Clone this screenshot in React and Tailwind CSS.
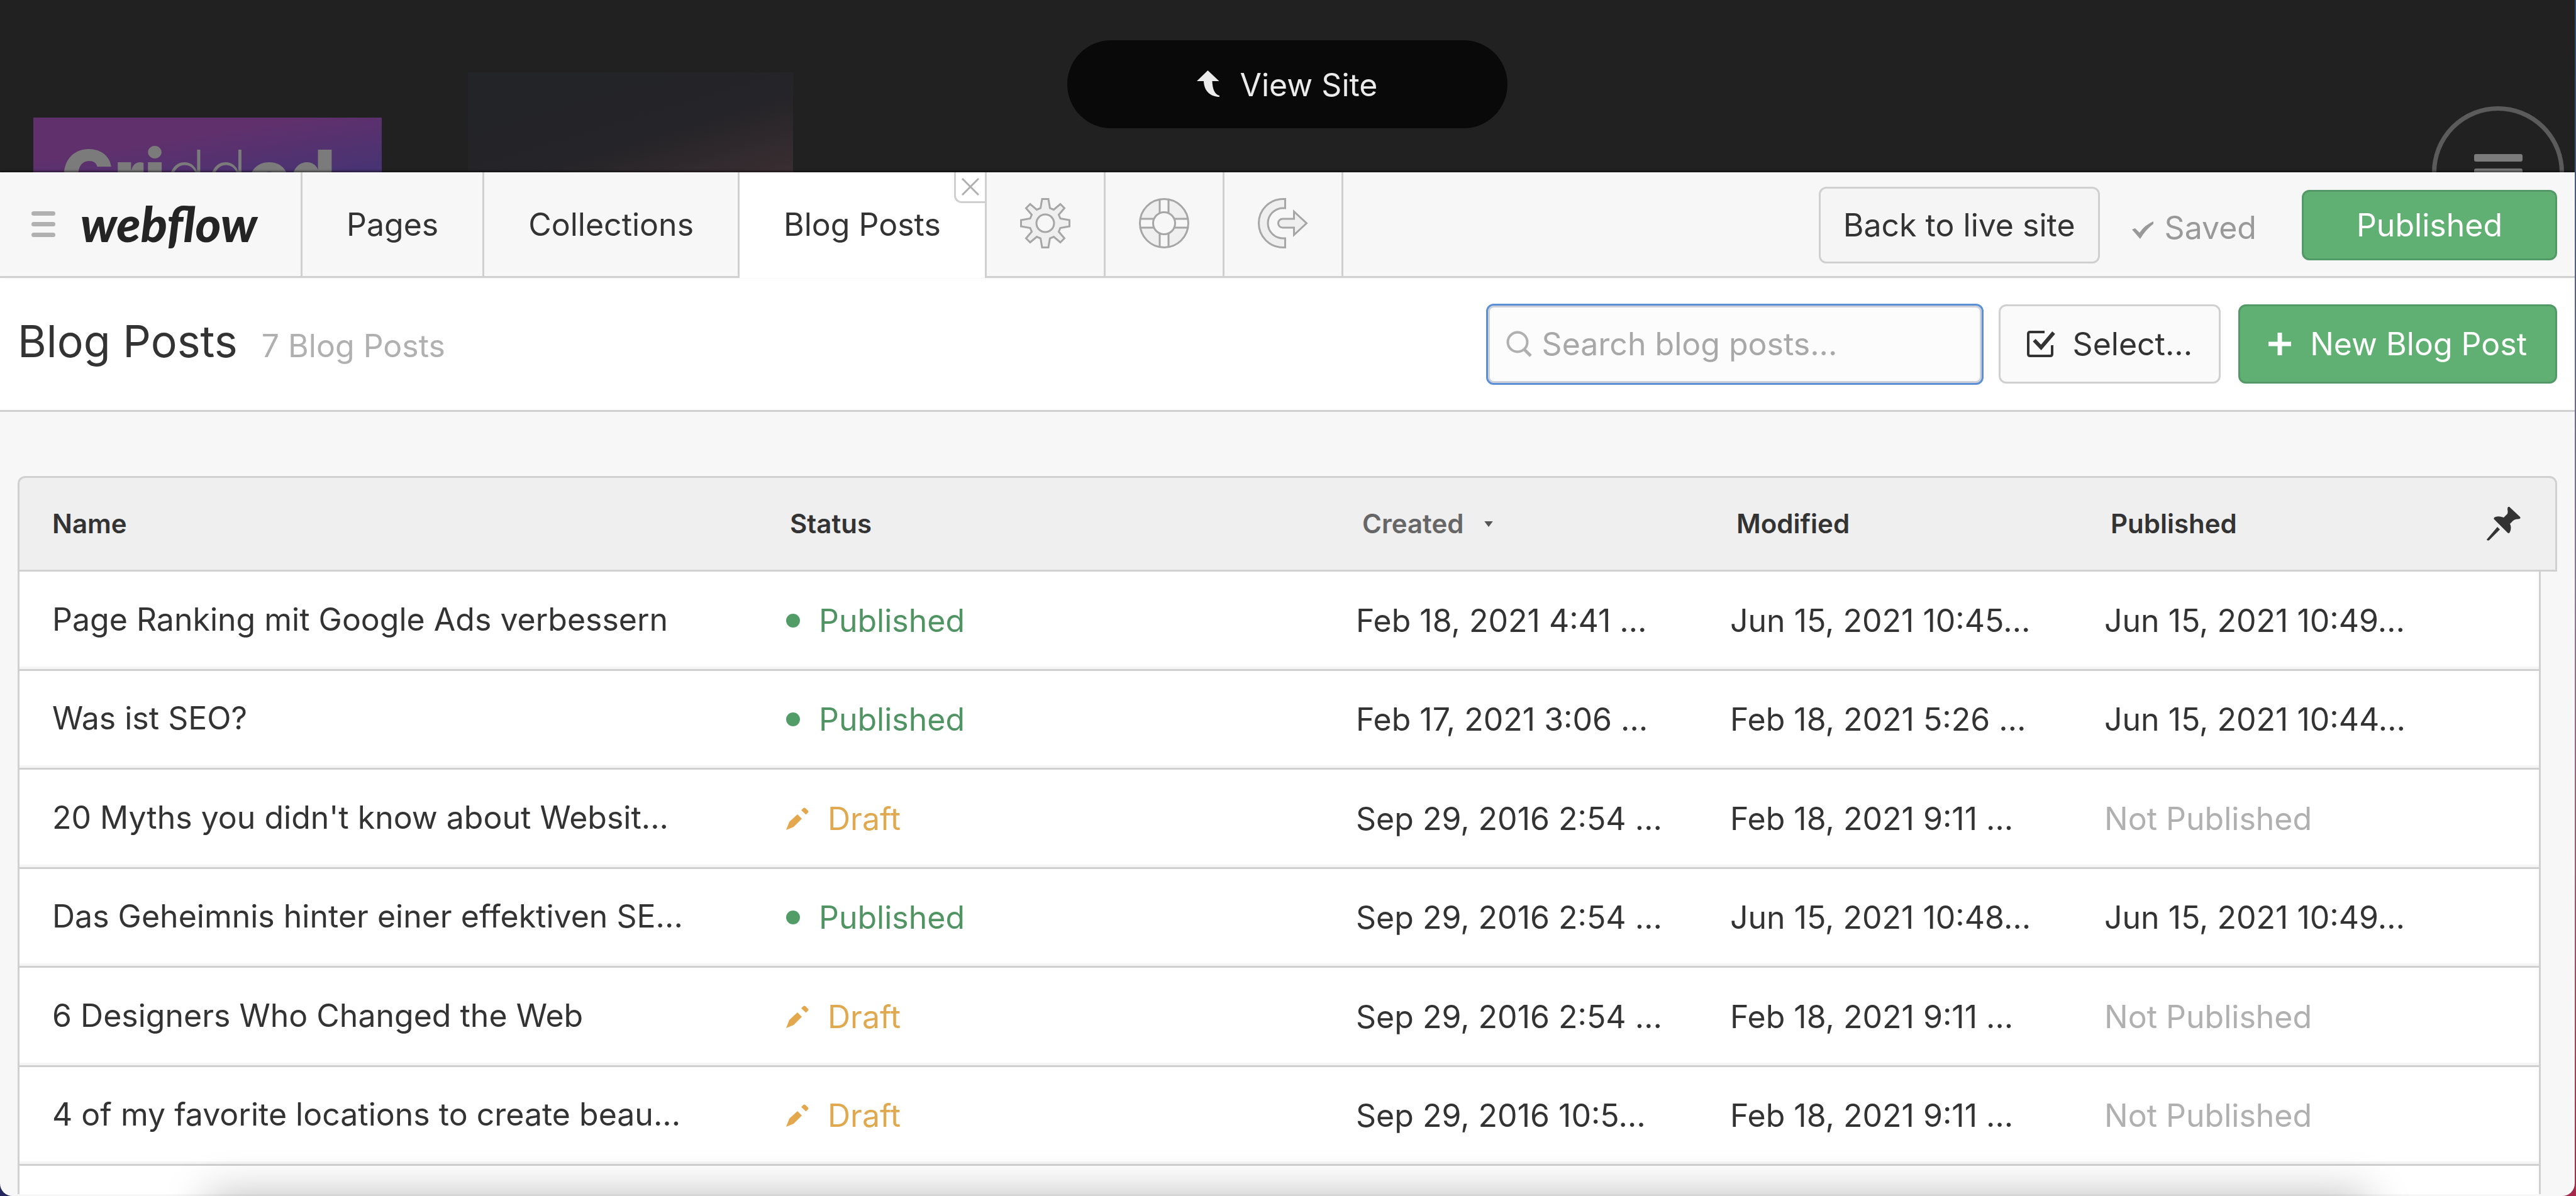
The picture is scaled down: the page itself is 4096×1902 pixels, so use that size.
import { useState } from "react";

const posts = [
  { name: "Page Ranking mit Google Ads verbessern", status: "Published", created: "Feb 18, 2021 4:41 …", modified: "Jun 15, 2021 10:45…", published: "Jun 15, 2021 10:49…" },
  { name: "Was ist SEO?", status: "Published", created: "Feb 17, 2021 3:06 …", modified: "Feb 18, 2021 5:26 …", published: "Jun 15, 2021 10:44…" },
  { name: "20 Myths you didn't know about Websit...", status: "Draft", created: "Sep 29, 2016 2:54 …", modified: "Feb 18, 2021 9:11 …", published: null },
  { name: "Das Geheimnis hinter einer effektiven SE...", status: "Published", created: "Sep 29, 2016 2:54 …", modified: "Jun 15, 2021 10:48…", published: "Jun 15, 2021 10:49…" },
  { name: "6 Designers Who Changed the Web", status: "Draft", created: "Sep 29, 2016 2:54 …", modified: "Feb 18, 2021 9:11 …", published: null },
  { name: "4 of my favorite locations to create beau...", status: "Draft", created: "Sep 29, 2016 10:5…", modified: "Feb 18, 2021 9:11 …", published: null },
];

const GearIcon = () => (
  <svg className="size-20" viewBox="0 0 80 80" fill="#efefef" stroke="#a6a6a6" strokeWidth="3">
    <path d="M35 1.5H45L47.5 16L53.5 18.5L64 9.5L70.5 16L61.5 26.5L64 32.5L78.5 35V45L64 47.5L61.5 53.5L70.5 64L64 70.5L53.5 61.5L47.5 64L45 78.5H35L32.5 64L26.5 61.5L16 70.5L9.5 64L18.5 53.5L16 47.5L1.5 45V35L16 32.5L18.5 26.5L9.5 16L16 9.5L26.5 18.5L32.5 16Z" />
    <circle cx="40" cy="40" r="14" fill="#f7f7f7" />
  </svg>
);

const HelpIcon = () => (
  <svg className="size-20" viewBox="0 0 80 80" fill="none" stroke="#a6a6a6" strokeWidth="3">
    <circle cx="40" cy="40" r="38.5" fill="#efefef" stroke="none" />
    <path d="M33 2H47V78H33ZM2 33H78V47H2Z" fill="#f7f7f7" stroke="none" />
    <path d="M33 2V24M47 2V24M33 56V78M47 56V78M2 33H24M2 47H24M56 33H78M56 47H78" />
    <circle cx="40" cy="40" r="38.5" />
    <circle cx="40" cy="40" r="17.5" fill="#f7f7f7" />
  </svg>
);

const ExitIcon = () => (
  <svg className="size-20" viewBox="0 0 80 80" fill="#efefef" stroke="#a6a6a6" strokeWidth="3">
    <path d="M43.5 1.5H40A38.5 38.5 0 0 0 40 78.5H43.5V64H40A24 24 0 0 1 40 16H43.5Z" />
    <path d="M39.5 33H57.5V21.5L77.5 40L57.5 58.5V47H39.5A7 7 0 0 1 39.5 33Z" />
  </svg>
);

const SearchIcon = () => (
  <svg className="h-[42px] w-[41px] shrink-0" viewBox="0 0 41 42" fill="none" stroke="#b0b0b0">
    <circle cx="18" cy="18" r="15.5" strokeWidth="4" />
    <path d="M28.5 29.5L39 40" strokeWidth="5" />
  </svg>
);

const SelectIcon = () => (
  <svg className="h-[42px] w-[45px]" viewBox="0 0 45 42" fill="none" stroke="#333" strokeWidth="4">
    <path d="M28 2H5Q2 2 2 5V37Q2 40 5 40H37Q40 40 40 37V23" />
    <path d="M11.5 15L22.5 26.5L42.5 3" strokeWidth="6" />
  </svg>
);

const PlusIcon = () => (
  <svg className="size-9" viewBox="0 0 36 36" fill="none" stroke="#fff" strokeWidth="7">
    <path d="M18 0V36M0 18H36" />
  </svg>
);

const PinIcon = () => (
  <svg className="size-[54px]" viewBox="0 0 54 54" fill="#333">
    <path d="M36 0L53 16Q55 19 50 19.500Q45 19 42 22L37 27Q40 33 37 40Q35.500 43.500 33 41L12 20Q10 17.500 14 16Q20 14 27 17L33 11Q34 8 33 4Q33 -1 36 0Z" />
    <path d="M17 32L21 36L4 53Q1 54.500 0 52Z" />
  </svg>
);

const PencilIcon = () => (
  <svg className="size-9" viewBox="0 0 36 36" fill="#e3a84d">
    <path d="M18 11L25 18L12 31L0 36L5 23Z" />
    <path d="M27.500 1Q29 0 30.500 1L35 5.500Q36 7 35 8L31.500 11.500L24 4.500Z" />
  </svg>
);

const Status = ({ status }) => {
  if (status === "Draft") {
    return (
      <span className="flex items-center gap-[30px] text-[#e0a94f]">
        <PencilIcon />
        Draft
      </span>
    );
  }
  return (
    <span className="flex items-center gap-[30px] text-[#509463]">
      <span className="size-[22px] rounded-full bg-[#529c68]" />
      Published
    </span>
  );
};

function SitePreview() {
  return (
    <div className="relative flex h-[274px] items-start overflow-hidden bg-[#212121]">
      <div className="mt-[187px] ml-[53px] h-[87px] w-[554px] overflow-hidden bg-linear-to-br from-[#5f306c] from-40% to-[#463373] pt-9 pl-[45px] text-[111px] leading-none text-[#7b7b7b]">
        <span className="font-black">Gri</span>
        <span className="font-extralight">dd</span>
        <span className="font-black">ed</span>
      </div>
      <div className="mt-[115px] ml-[137px] h-[159px] w-[517px] bg-linear-to-br from-[#222427] via-[#252428] via-60% to-[#3a2e32]" />
      <button aria-label="Menu" className="mt-[169px] mr-[17px] ml-auto flex size-[210px] shrink-0 flex-col items-center gap-[11px] rounded-full border-[7px] border-[#5b5b5b] pt-[69px]">
        <span className="h-3 w-[77px] rounded-[3px] bg-[#7b7b7b]" />
        <span className="h-3 w-[77px] rounded-[3px] bg-[#7b7b7b]" />
      </button>
      <div className="absolute inset-x-0 top-16 flex justify-center">
        <button className="flex h-[140px] w-[700px] items-center justify-center gap-8 rounded-full bg-[#090909] pt-[2px] text-[#ebebeb]">
          <svg className="mb-1 h-[42px] w-9" viewBox="0 0 36 42" fill="#ebebeb">
            <path d="M17.500 0L35.500 17H24.500C25 29 28 38 36 40V42C22 42 11.500 33 11 17H0Z" />
          </svg>
          View Site
        </button>
      </div>
    </div>
  );
}

function TopBar() {
  return (
    <nav className="relative flex h-[168px] bg-[#f7f7f7] shadow-[0_-2px_3px_rgba(0,0,0,0.5)]">
      <div className="flex w-[481px] items-center border-r-[3px] border-b-[3px] border-[#d0d0d0] pl-[50px]">
        <button aria-label="Toggle menu" className="flex flex-col gap-[10px]">
          <span className="h-[7px] w-[38px] rounded-sm bg-[#b1b1b1]" />
          <span className="h-[7px] w-[38px] rounded-sm bg-[#b1b1b1]" />
          <span className="h-[7px] w-[38px] rounded-sm bg-[#b1b1b1]" />
        </button>
        <span className="ml-10 pb-1 font-['Lato',sans-serif] text-[78px] leading-none font-black text-[#242424] italic">webflow</span>
      </div>
      <button className="border-r-[3px] border-b-[3px] border-[#d0d0d0] px-[70px]">Pages</button>
      <button className="border-r-[3px] border-b-[3px] border-[#d0d0d0] px-[70px]">Collections</button>
      <div className="relative flex border-r-[3px] border-[#d0d0d0] bg-white">
        <button className="border-b-[3px] border-white px-[70px]">Blog Posts</button>
        <button aria-label="Close tab" className="absolute top-0 right-0 flex size-[49px] items-center justify-center rounded-bl-xl border-b-[3px] border-l-[3px] border-[#d0d0d0]">
          <svg className="size-7" viewBox="0 0 28 28" stroke="#b0b0b0" strokeWidth="3">
            <path d="M1 1L27 27M27 1L1 27" />
          </svg>
        </button>
      </div>
      <button aria-label="Settings" className="flex w-[189px] items-center justify-center border-r-[3px] border-b-[3px] border-[#d0d0d0] pb-[3px]">
        <GearIcon />
      </button>
      <button aria-label="Help" className="flex w-[189px] items-center justify-center border-r-[3px] border-b-[3px] border-[#d0d0d0] pb-[3px]">
        <HelpIcon />
      </button>
      <button aria-label="Log out" className="flex w-[189px] items-center justify-center border-r-[3px] border-b-[3px] border-[#d0d0d0] pb-[3px]">
        <ExitIcon />
      </button>
      <div className="flex flex-1 items-center justify-end border-b-[3px] border-[#d0d0d0] pt-[3px] pr-7">
        <button className="h-[122px] rounded-xl border-[3px] border-[#d0d0d0] bg-[#f5f5f5] px-9">Back to live site</button>
        <span className="mr-[72px] ml-[51px] flex items-center gap-[18px] pt-2 text-[#999]">
          <svg className="mt-2 h-7 w-[34px]" viewBox="0 0 34 28" fill="#999">
            <path d="M0 13L5 11L12 18Q20 6 34 0V4Q22 13 13 28Z" />
          </svg>
          Saved
        </span>
        <button className="h-28 rounded-xl border-[3px] border-[#529967] bg-[#5fb072] px-[84px] text-white">Published</button>
      </div>
    </nav>
  );
}

function PageHeader() {
  const [query, setQuery] = useState("");

  return (
    <header className="flex h-[213px] items-center border-b-[3px] border-[#d0d0d0] bg-white pr-7 pl-7">
      <div className="flex items-baseline gap-[38px] pb-[2px]">
        <h1 className="text-[70px]">Blog Posts</h1>
        <span className="text-[#b0b0b0]">7 Blog Posts</span>
      </div>
      <div className="ml-auto flex items-center">
        <label className="flex h-[129px] w-[791px] items-center gap-4 rounded-xl border-[3px] border-[#5b8fd6] bg-[#fcfcfc] pl-[29px] inset-ring-3 inset-ring-[#cdd0d6]">
          <SearchIcon />
          <input
            type="text"
            aria-label="Search blog posts"
            value={query}
            onChange={(e) => setQuery(e.target.value)}
            placeholder="Search blog posts..."
            className="w-[640px] bg-transparent outline-none placeholder:text-[#a8a8a8]"
          />
        </label>
        <button className="ml-6 flex h-[126px] items-center gap-7 rounded-xl border-[3px] border-[#d0d0d0] bg-[#fafafa] px-[42px]">
          <SelectIcon />
          Select...
        </button>
        <button className="ml-7 flex h-[126px] items-center gap-[30px] rounded-xl border-[3px] border-[#529967] bg-[#5fb072] px-[45px] text-white">
          <PlusIcon />
          New Blog Post
        </button>
      </div>
    </header>
  );
}

function PostsTable() {
  return (
    <table className="w-full table-fixed border-separate border-spacing-0 whitespace-nowrap">
      <colgroup>
        <col />
        <col className="w-[904px]" />
        <col className="w-[595px]" />
        <col className="w-[595px]" />
        <col className="w-[582px]" />
        <col className="w-[132px]" />
        <col className="w-[26px]" />
      </colgroup>
      <thead>
        <tr className="h-[152px] text-left text-[42px] [&>th]:border-y-[3px] [&>th]:border-[#d0d0d0] [&>th]:bg-[#efefef] [&>th]:font-semibold">
          <th className="rounded-tl-xl border-l-[3px] pl-[52px]">Name</th>
          <th className="pl-6">Status</th>
          <th className="pl-[30px] text-[#666]">
            <span className="flex items-center gap-8">
              Created
              <svg className="h-[9px] w-[14px]" viewBox="0 0 12 8" fill="#555">
                <path d="M0 0H12L6 8Z" />
              </svg>
            </span>
          </th>
          <th className="pl-[30px]">Modified</th>
          <th className="pl-[30px]">Published</th>
          <th colSpan={2} className="rounded-tr-xl border-r-[3px] pl-[46px]">
            <PinIcon />
          </th>
        </tr>
      </thead>
      <tbody>
        {posts.map((post) => (
          <tr
            key={post.name}
            className="odd:h-[158px] even:h-[157px] [&>td]:border-b-[3px] [&>td]:border-[#d0d0d0] [&>td]:bg-white [&>td]:shadow-[inset_0_-4px_0_#f5f5f5]"
          >
            <td className="border-l-[3px] pb-1 pl-[52px]">{post.name}</td>
            <td className="pl-[18px]">
              <Status status={post.status} />
            </td>
            <td className="pl-5">{post.created}</td>
            <td className="pl-5">{post.modified}</td>
            <td className="pl-5">{post.published || <span className="text-[#b0b0b0]">Not Published</span>}</td>
            <td className="border-r-[3px]" />
          </tr>
        ))}
        {/* next row, cut by the window's bottom edge */}
        <tr className="h-[45px]">
          <td colSpan={6} className="border-x-[3px] border-[#d0d0d0] bg-white" />
        </tr>
      </tbody>
    </table>
  );
}

export default function App() {
  return (
    <div className="flex bg-linear-to-r from-[#23275c] to-[#a5284a] font-['Inter',sans-serif] text-[50px] leading-[60px] text-[#333]">
      <main className="relative flex-1 overflow-hidden rounded-b-[20px] bg-[#f7f7f7]">
        <SitePreview />
        <TopBar />
        <PageHeader />
        <div className="pt-[102px] pr-7 pb-[3px] pl-7">
          <PostsTable />
        </div>
        <div className="absolute inset-x-[330px] -bottom-[100px] h-[100px] shadow-[0_0_70px_rgba(0,0,0,0.28)]" />
      </main>
      {/* desktop seen past the window's right edge */}
      <div className="w-[2px] bg-linear-to-b from-[#2c4a6c] via-[#8a7a90] to-[#a5284a]" />
    </div>
  );
}
